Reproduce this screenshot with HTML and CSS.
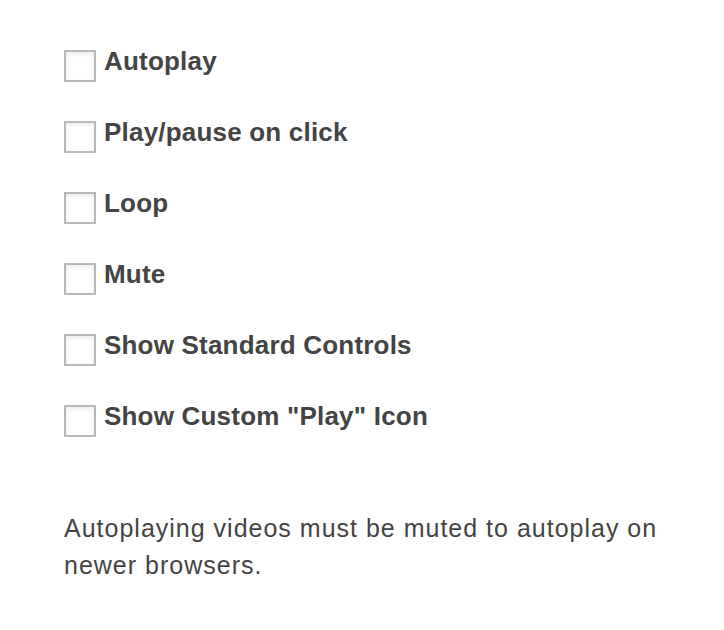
FILE: index.html
```html
<!DOCTYPE html>
<html lang="en">

<head>
    <meta charset="UTF-8">
    <meta name="viewport" content="width=device-width, initial-scale=1.0">
    <title>Video settings</title>
    <link rel="stylesheet" href="styles.css">
</head>

<body>
    <div class="settings">
        <label class="option"><input type="checkbox"><span>Autoplay</span></label>
        <label class="option"><input type="checkbox"><span>Play/pause on click</span></label>
        <label class="option"><input type="checkbox"><span>Loop</span></label>
        <label class="option"><input type="checkbox"><span>Mute</span></label>
        <label class="option"><input type="checkbox"><span>Show Standard Controls</span></label>
        <label class="option"><input type="checkbox"><span>Show Custom "Play" Icon</span></label>

        <p class="help">Autoplaying videos must be muted to autoplay on newer browsers.</p>
    </div>
</body>

</html>
```

FILE: styles.css
```css
* {
    margin: 0;
    padding: 0;
    box-sizing: border-box;
}

body {
    background-color: white;
    color: #444;
    font-family: "Liberation Sans", Arial, sans-serif;
}

.settings {
    padding: 50px 40px 0 64px;
    display: flex;
    flex-direction: column;
    gap: 39px;
}

.option {
    display: flex;
    align-items: flex-start;
    gap: 8px;
    font-size: 26px;
    font-weight: bold;
    line-height: 32px;
    letter-spacing: 0.2px;
}

.option span {
    margin-top: -5px;
}

.option input {
    appearance: none;
    -webkit-appearance: none;
    width: 32px;
    height: 32px;
    flex-shrink: 0;
    border: 2px solid #b4b9be;
    background-color: white;
    box-shadow: inset 0 2px 4px rgba(0, 0, 0, 0.08);
    margin: 0;
}

.help {
    margin-top: 34px;
    font-size: 25px;
    line-height: 37px;
    letter-spacing: 1px;
    font-weight: normal;
    width: 620px;
}
```
